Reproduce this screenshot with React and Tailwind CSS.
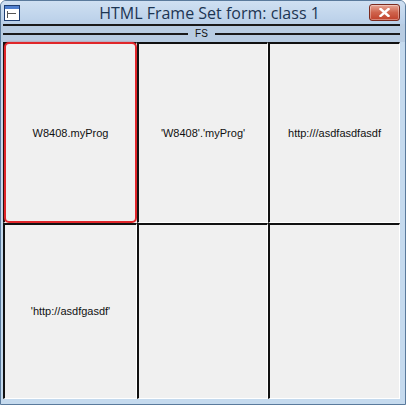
import React from 'react';

const cells = [
  { text: 'W8408.myProg', selected: true },
  { text: "'W8408'.'myProg'" },
  { text: 'http:///asdfasdfasdf' },
  { text: "'http://asdfgasdf'" },
  { text: '' },
  { text: '' },
];

const FormIcon = () => (
  <svg width="16" height="16" viewBox="0 0 16 16">
    <rect x="0.5" y="0.5" width="15" height="15" fill="#ffffff" stroke="#1f3f73" />
    <rect x="1" y="1" width="14" height="3" fill="#4f7fcf" />
    <line x1="3.5" y1="6" x2="3.5" y2="13" stroke="#555" />
    <line x1="3.5" y1="8.5" x2="12" y2="8.5" stroke="#555" />
  </svg>
);

const App = () => {
  return (
    <div
      className="w-[406px] h-[405px] flex flex-col bg-[#c5daee] border border-[#5a7a9c] rounded-t-[6px] overflow-hidden"
      style={{ fontFamily: '"Liberation Sans", Arial, sans-serif' }}
    >
      {/* title bar */}
      <div className="h-[23px] flex items-center pl-[3px] pr-[5px] bg-gradient-to-b from-[#cfe0f2] to-[#b9cfe8]">
        <FormIcon />
        <div
          className="flex-1 text-center text-[16px] text-[#1c3553] leading-none pt-[1px] pl-[30px]"
          style={{ fontFamily: '"Open Sans", "Noto Sans", sans-serif' }}
        >
          HTML Frame Set form: class 1
        </div>
        <div className="w-[31px] h-[17px] flex items-center justify-center rounded-[3px] border border-[#7b2a1e] bg-gradient-to-b from-[#e6a595] via-[#cf634c] to-[#c0402a] shadow-[inset_0_0_0_1px_rgba(255,255,255,0.35)]">
          <svg width="11" height="9" viewBox="0 0 11 9">
            <path d="M1.5 1 L9.5 8 M9.5 1 L1.5 8" stroke="#ffffff" strokeWidth="2.4" strokeLinecap="square" />
          </svg>
        </div>
      </div>

      {/* FS caption */}
      <div className="h-[18px] flex flex-col pl-[2px] pr-[5px] bg-[#b8cce2]">
        <div className="h-[2px] bg-[#1a1a1a]" />
        <div className="flex items-center h-[14px] mt-[1px]">
          <div className="flex-1 h-[2px] bg-[#1a1a1a]" />
          <span className="px-[7px] text-[10px] leading-none text-[#111]">FS</span>
          <div className="flex-1 h-[2px] bg-[#1a1a1a]" />
        </div>
      </div>

      {/* frames */}
      <div className="flex-1 pl-[2px] pr-[5px] pb-[5px]">
        <div className="h-full grid grid-cols-[134px_131px_1fr] grid-rows-[181px_1fr] bg-[#f0f0f0]">
          {cells.map((c, i) => (
            <div
              key={i}
              className="relative flex items-center justify-center border-l-2 border-t-2 border-[#111] border-r border-r-white border-b border-b-white bg-[#f0f0f0] text-[11px] text-[#111]"
            >
              {c.selected && (
                <div className="absolute -left-[1px] -top-[2px] right-[-1px] bottom-[-1px] border-2 border-[#e0262a] rounded-[5px] shadow-[0_0_2px_rgba(200,0,0,0.5)]" />
              )}
              {c.text}
            </div>
          ))}
        </div>
      </div>
    </div>
  );
};

export default App;
